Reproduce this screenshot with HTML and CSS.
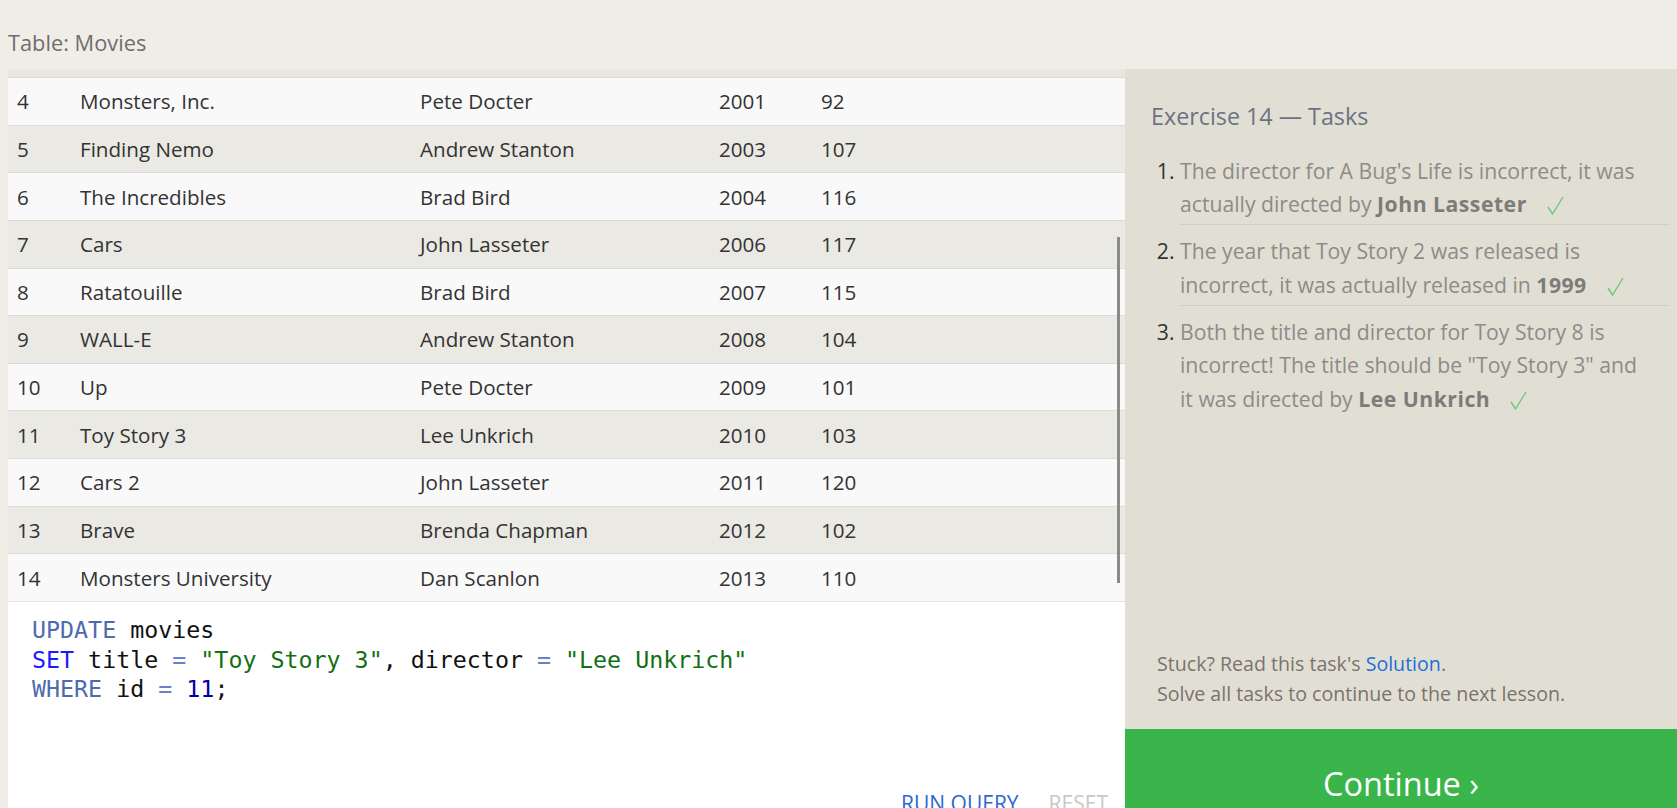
FILE: index.html
```html
<!DOCTYPE html>
<html lang="en">
<head>
<meta charset="utf-8">
<title>SQL Lesson — Exercise 14</title>
<link rel="stylesheet" href="styles.css">
</head>
<body>
<div class="page">
  <div class="caption">Table: Movies</div>
  <div class="main">
    <div class="left">
      <div class="table-wrap">
        <table class="movies">
          <colgroup>
            <col class="c-id"><col class="c-title"><col class="c-dir"><col class="c-year"><col class="c-len">
          </colgroup>
          <tbody>
            <tr><td>4</td><td>Monsters, Inc.</td><td>Pete Docter</td><td>2001</td><td>92</td></tr>
            <tr><td>5</td><td>Finding Nemo</td><td>Andrew Stanton</td><td>2003</td><td>107</td></tr>
            <tr><td>6</td><td>The Incredibles</td><td>Brad Bird</td><td>2004</td><td>116</td></tr>
            <tr><td>7</td><td>Cars</td><td>John Lasseter</td><td>2006</td><td>117</td></tr>
            <tr><td>8</td><td>Ratatouille</td><td>Brad Bird</td><td>2007</td><td>115</td></tr>
            <tr><td>9</td><td>WALL-E</td><td>Andrew Stanton</td><td>2008</td><td>104</td></tr>
            <tr><td>10</td><td>Up</td><td>Pete Docter</td><td>2009</td><td>101</td></tr>
            <tr><td>11</td><td>Toy Story 3</td><td>Lee Unkrich</td><td>2010</td><td>103</td></tr>
            <tr><td>12</td><td>Cars 2</td><td>John Lasseter</td><td>2011</td><td>120</td></tr>
            <tr><td>13</td><td>Brave</td><td>Brenda Chapman</td><td>2012</td><td>102</td></tr>
            <tr><td>14</td><td>Monsters University</td><td>Dan Scanlon</td><td>2013</td><td>110</td></tr>
          </tbody>
        </table>
        <div class="scroll-thumb"></div>
      </div>
      <div class="editor">
<pre class="code"><span class="kw">UPDATE</span> movies
<span class="kw2">SET</span> title <span class="op">=</span> <span class="str">"Toy Story 3"</span>, director <span class="op">=</span> <span class="str">"Lee Unkrich"</span>
<span class="kw">WHERE</span> id <span class="op">=</span> <span class="num">11</span>;</pre>
        <div class="actions">
          <span class="run">RUN QUERY</span>
          <span class="reset">RESET</span>
        </div>
      </div>
    </div>
    <div class="right">
      <div class="tasks">
        <h2 class="tasks-title">Exercise 14 — Tasks</h2>
        <ol class="task-list">
          <li>The director for A Bug's Life is incorrect, it was actually directed by <b>John Lasseter</b><svg class="check" viewBox="0 0 17 19" width="17" height="19"><polyline points="1,11 5.5,18 16,1"/></svg></li>
          <li>The year that Toy Story 2 was released is incorrect, it was actually released in <b>1999</b><svg class="check" viewBox="0 0 17 19" width="17" height="19"><polyline points="1,11 5.5,18 16,1"/></svg></li>
          <li>Both the title and director for Toy Story 8 is incorrect! The title should be "Toy Story 3" and it was directed by <b>Lee Unkrich</b><svg class="check" viewBox="0 0 17 19" width="17" height="19"><polyline points="1,11 5.5,18 16,1"/></svg></li>
        </ol>
      </div>
      <div class="help">
        <p>Stuck? Read this task's <a class="link">Solution</a>.</p>
        <p>Solve all tasks to continue to the next lesson.</p>
      </div>
      <div class="continue">Continue ›</div>
    </div>
  </div>
</div>
</body>
</html>
```
FILE: styles.css
```css
* { box-sizing: border-box; }
html, body { margin: 0; padding: 0; }
body {
  width: 1677px;
  height: 808px;
  overflow: hidden;
  background: #efede6;
  font-family: "Open Sans", "Noto Sans", sans-serif;
  color: #333;
}
.page { display: flex; flex-direction: column; height: 808px; }
.caption {
  height: 69px;
  padding: 28px 0 0 8px;
  font-size: 21.8px;
  color: #6e6e6e;
  line-height: 30px;
}
.main { display: flex; flex: 1; min-height: 0; padding-left: 8px; }
.left { width: 1117px; display: flex; flex-direction: column; }
.table-wrap {
  position: relative;
  flex: none;
  height: 532px;
  padding-top: 8px;
  background: #e9e7e0;
  overflow: hidden;
}
.movies {
  width: 100%;
  border-collapse: separate;
  border-spacing: 0;
  table-layout: fixed;
  font-size: 20.6px;
  color: #333;
}
.c-id { width: 63px; }
.c-title { width: 340px; }
.c-dir { width: 299px; }
.c-year { width: 102px; }
.movies td {
  height: 47.64px;
  padding: 0 9px;
  border-top: 1px solid #dcdbd6;
  white-space: nowrap;
  vertical-align: middle;
}
.movies tr:nth-child(odd) td { background: #f9f9f9; }
.movies tr:nth-child(even) td { background: #eae9e3; }
.scroll-thumb {
  position: absolute;
  left: 1109px;
  top: 168px;
  width: 3px;
  height: 346px;
  background: #8a8a8a;
}
.editor {
  flex: 1;
  min-height: 0;
  background: #fff;
  border-top: 1px solid #e4e3de;
  padding: 13px 17px 0 24px;
  display: flex;
  flex-direction: column;
}
.code {
  margin: 0;
  font-family: "DejaVu Sans Mono", "Liberation Mono", monospace;
  font-size: 23.3px;
  line-height: 29.5px;
  color: #111;
  height: 174px;
  flex: none;
}
.kw { color: #4f6bb0; }
.kw2 { color: #1a1aff; }
.op { color: #6b80c8; }
.str { color: #127012; }
.num { color: #0000aa; }
.actions {
  display: flex;
  justify-content: flex-end;
  gap: 30px;
  font-size: 21px;
  line-height: 28px;
  white-space: nowrap;
  flex: none;
}
.run { color: #2b68d9; }
.reset { color: #c8c8c8; }
.right {
  flex: 1;
  background: #e1dfd4;
  display: flex;
  flex-direction: column;
}
.tasks { padding: 30px 0 0 26px; flex: 1; }
.tasks-title {
  margin: 0 0 20.5px 0;
  font-weight: normal;
  font-size: 23.3px;
  line-height: 34px;
  color: #6b7283;
}
.task-list {
  margin: 0 7px 0 0;
  padding: 0 0 0 29px;
  font-size: 21.2px;
  line-height: 33.8px;
  color: #8c8c88;
}
.task-list li {
  padding: 0 33px 3px 0;
  border-bottom: 1px solid #d1cfc5;
}
.task-list li + li { padding-top: 9px; }
.task-list li:last-child { border-bottom: none; }
.task-list li::marker { color: #333; }
.task-list b { color: #7c7c79; letter-spacing: 0.5px; }
.check {
  display: inline-block;
  vertical-align: -3px;
  margin-left: 20px;
  fill: none;
  stroke: #6cc97a;
  stroke-width: 1.4;
}
.help {
  padding: 0 0 20px 32px;
  font-size: 19.6px;
  line-height: 30px;
  color: #7a736e;
}
.help p { margin: 0; }
.link { color: #1d6fd6; }
.continue {
  height: 108px;
  flex: none;
  margin-bottom: -29px;
  background: #3ab54b;
  color: #fff;
  font-size: 32.5px;
  display: flex;
  align-items: center;
  justify-content: center;
}
```
